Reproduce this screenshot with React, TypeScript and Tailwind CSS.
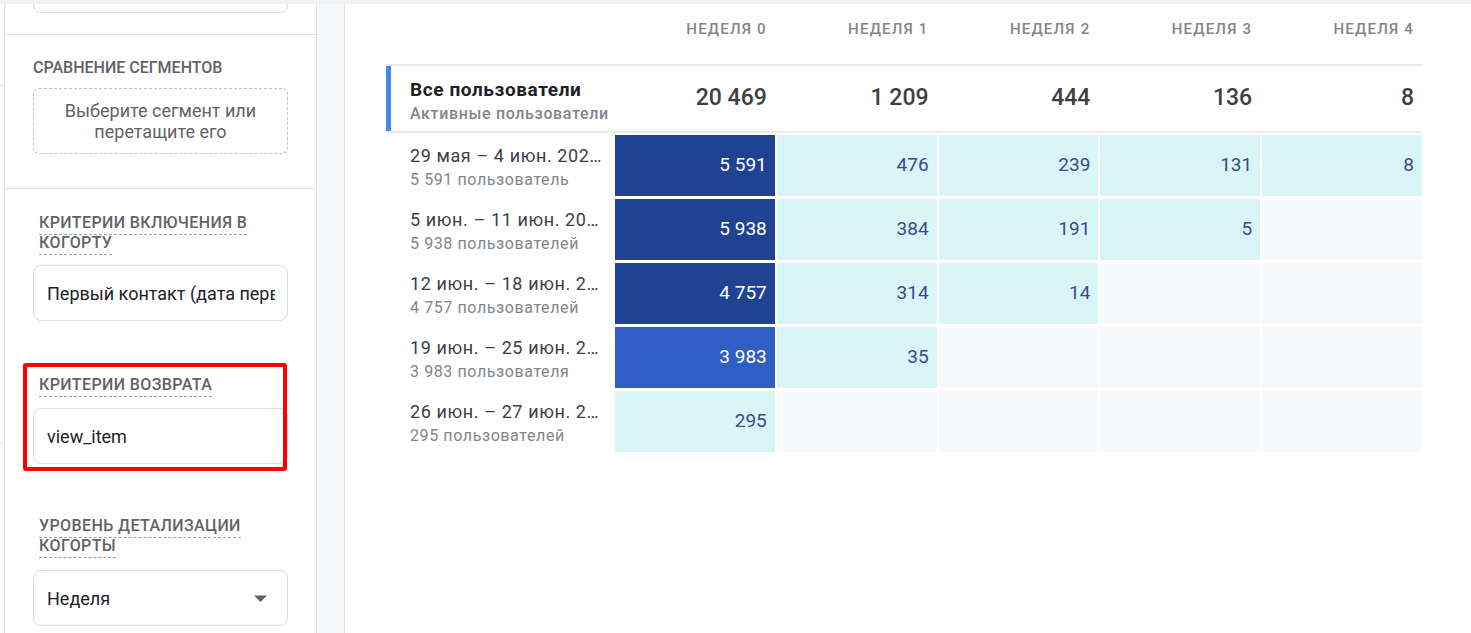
import React from "react";

type Kind = "dark" | "mid" | "light" | "empty";
type Cell = { v: string; k: Kind };

const kindClass: Record<Kind, string> = {
  dark: "bg-[#1f4293] text-white",
  mid: "bg-[#2f5ec4] text-white",
  light: "bg-[#d9f5f8] text-[#3c4a8c]",
  empty: "bg-[#f8f9fa]",
};

const E: Cell = { v: "", k: "empty" };

const rows: { d: string; s: string; c: Cell[] }[] = [
  {
    d: "29 мая – 4 июн. 2023 г.",
    s: "5\u00A0591 пользователь",
    c: [
      { v: "5\u00A0591", k: "dark" },
      { v: "476", k: "light" },
      { v: "239", k: "light" },
      { v: "131", k: "light" },
      { v: "8", k: "light" },
    ],
  },
  {
    d: "5 июн. – 11 июн. 2023 г.",
    s: "5\u00A0938 пользователей",
    c: [
      { v: "5\u00A0938", k: "dark" },
      { v: "384", k: "light" },
      { v: "191", k: "light" },
      { v: "5", k: "light" },
      E,
    ],
  },
  {
    d: "12 июн. – 18 июн. 2023 г.",
    s: "4\u00A0757 пользователей",
    c: [
      { v: "4\u00A0757", k: "dark" },
      { v: "314", k: "light" },
      { v: "14", k: "light" },
      E,
      E,
    ],
  },
  {
    d: "19 июн. – 25 июн. 2023 г.",
    s: "3\u00A0983 пользователя",
    c: [{ v: "3\u00A0983", k: "mid" }, { v: "35", k: "light" }, E, E, E],
  },
  {
    d: "26 июн. – 27 июн. 2023 г.",
    s: "295 пользователей",
    c: [{ v: "295", k: "light" }, E, E, E, E],
  },
];

const totals = ["20\u00A0469", "1\u00A0209", "444", "136", "8"];
const weeks = ["НЕДЕЛЯ 0", "НЕДЕЛЯ 1", "НЕДЕЛЯ 2", "НЕДЕЛЯ 3", "НЕДЕЛЯ 4"];

const GRID = "grid grid-cols-[227px_repeat(5,minmax(0,1fr))] gap-x-[2px]";

function DashedLabel({ lines }: { lines: string[] }) {
  return (
    <div className="pl-[34px] text-[16px] leading-[20px] font-medium tracking-[0.4px] text-[#5f6368]">
      <span className="border-b border-dashed border-[#9aa0a6] pb-[2px]">
        {lines.map((l, i) => (
          <React.Fragment key={i}>
            {i > 0 && <br />}
            {l}
          </React.Fragment>
        ))}
      </span>
    </div>
  );
}

function InputBox({ children }: { children: React.ReactNode }) {
  return (
    <div className="mx-[28px] h-[56px] rounded-[8px] border border-[#dadce0] bg-white flex items-center pl-[13px] pr-[12px] text-[18px] text-[#202124]">
      {children}
    </div>
  );
}

export default function App() {
  return (
    <div className="w-[1471px] h-[633px] overflow-hidden bg-white font-['Roboto',sans-serif] relative">
      <div className="h-[4px] bg-[#f1f3f4]" />
      <div className="flex h-[629px]">
        {/* left sliver */}
        <div className="w-[4px] flex flex-col">
          <div className="h-[81px]" />
          <div className="h-px bg-[#e0e0e0]" />
          <div className="h-[357px]" />
          <div className="h-px bg-[#e0e0e0]" />
        </div>

        {/* sidebar */}
        <aside className="w-[313px] border-l border-r border-[#e0e0e0] bg-white overflow-hidden flex flex-col">
          <div className="pb-[21px] border-b border-[#e0e0e0]">
            <div className="-mt-[47px] mx-[28px] h-[56px] rounded-[8px] border border-[#dadce0]" />
          </div>

          <div className="pt-[23px] pb-[34px] border-b border-[#e0e0e0]">
            <div className="pl-[28px] text-[16px] leading-[20px] font-medium text-[#5f6368]">
              СРАВНЕНИЕ СЕГМЕНТОВ
            </div>
            <div className="mt-[10px] mx-[28px] h-[66px] rounded-[6px] border border-dashed border-[#bdc1c6] flex items-center justify-center text-center text-[18px] leading-[21px] text-[#5f6368]">
              Выберите сегмент или
              <br />
              перетащите его
            </div>
          </div>

          <div className="pt-[24px]">
            <DashedLabel lines={["КРИТЕРИИ ВКЛЮЧЕНИЯ В", "КОГОРТУ"]} />
            <div className="mt-[12px]">
              <InputBox>
                <div className="overflow-hidden whitespace-nowrap">
                  Первый контакт (дата первого посещения)
                </div>
              </InputBox>
            </div>
          </div>

          <div className="pt-[54px]">
            <DashedLabel lines={["КРИТЕРИИ ВОЗВРАТА"]} />
            <div className="mt-[13px]">
              <InputBox>view_item</InputBox>
            </div>
          </div>

          <div className="pt-[52px]">
            <DashedLabel lines={["УРОВЕНЬ ДЕТАЛИЗАЦИИ", "КОГОРТЫ"]} />
            <div className="mt-[14px]">
              <InputBox>
                <div className="flex-1">Неделя</div>
                <svg width="13" height="7" viewBox="0 0 13 7" className="mr-[8px]">
                  <path d="M0 0.5h13L6.5 7z" fill="#5f6368" />
                </svg>
              </InputBox>
            </div>
          </div>
        </aside>

        {/* gray gutter */}
        <div className="w-[28px] bg-[#f8f9fa] border-r border-[#e0e0e0]" />

        {/* main */}
        <main className="flex-1 pl-[41px]">
          <div className="w-[1036px]">
            <div className={`${GRID} h-[60px] items-start pt-[15px]`}>
              <div />
              {weeks.map((w) => (
                <div
                  key={w}
                  className="text-right pr-[8px] text-[15px] leading-[20px] font-medium tracking-[1.2px] text-[#80868b]"
                >
                  {w}
                </div>
              ))}
            </div>

            <div className={`${GRID} border-y-2 border-[#e8eaed] h-[69px]`}>
              <div className="flex">
                <div className="w-[5px] bg-[#4285f4]" />
                <div className="pl-[19px] pt-[12px] whitespace-nowrap">
                  <div className="text-[19px] leading-[24px] font-bold tracking-[0.6px] text-[#202124]">
                    Все пользователи
                  </div>
                  <div className="text-[16px] leading-[24px] font-medium tracking-[0.65px] text-[#80868b]">
                    Активные пользователи
                  </div>
                </div>
              </div>
              {totals.map((t, i) => (
                <div
                  key={i}
                  className="flex items-center justify-end pr-[8px] text-[23px] font-medium text-[#3c4043]"
                >
                  {t}
                </div>
              ))}
            </div>

            <div className="mt-[2px] flex flex-col gap-y-[3px]">
              {rows.map((r, ri) => (
                <div key={ri} className={`${GRID} h-[61px]`}>
                  <div className="pl-[24px] pr-[8px] pt-[9px] min-w-0">
                    <div className="text-[18px] leading-[24px] tracking-[0.6px] text-[#3c4043] truncate">
                      {r.d}
                    </div>
                    <div className="text-[16px] leading-[24px] tracking-[0.6px] text-[#80868b] truncate">
                      {r.s}
                    </div>
                  </div>
                  {r.c.map((c, ci) => (
                    <div
                      key={ci}
                      className={`${kindClass[c.k]} flex items-center justify-end pr-[8px] text-[19px]`}
                    >
                      {c.v}
                    </div>
                  ))}
                </div>
              ))}
            </div>
          </div>
        </main>
      </div>

      {/* red annotation frame */}
      <div className="absolute left-[23px] top-[363px] w-[264px] h-[108px] border-[4px] border-[#ff0000] rounded-[3px]" />
    </div>
  );
}
